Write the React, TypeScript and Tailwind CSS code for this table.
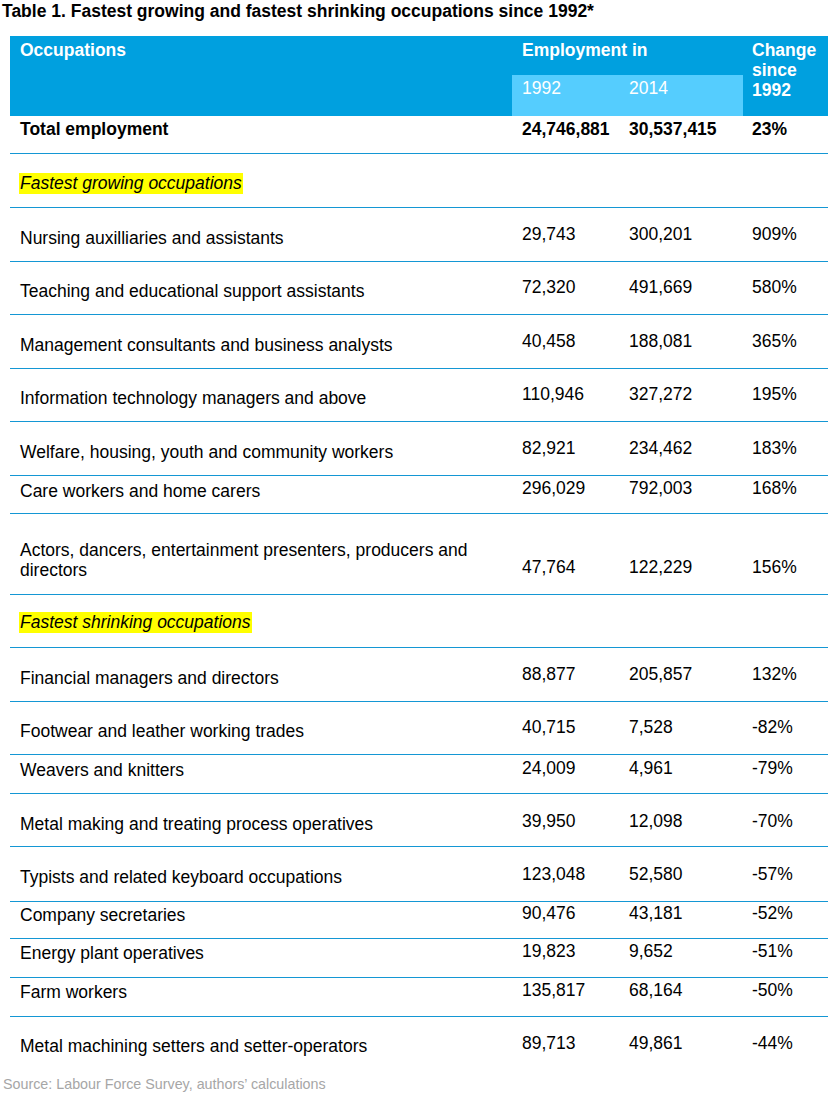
import React from "react";

type Row = {
  label: string;
  a?: string;
  b?: string;
  c?: string;
  h: number;
  pt: number;
  npt?: number;
  kind?: "total" | "section" | "plain";
  last?: boolean;
};

const rows: Row[] = [
  { label: "Total employment", a: "24,746,881", b: "30,537,415", c: "23%", h: 38, pt: 3, npt: 3, kind: "total" },
  { label: "Fastest growing occupations", h: 54, pt: 18, kind: "section" },
  { label: "Nursing auxilliaries and assistants", a: "29,743", b: "300,201", c: "909%", h: 54, pt: 20, npt: 16 },
  { label: "Teaching and educational support assistants", a: "72,320", b: "491,669", c: "580%", h: 53, pt: 19, npt: 15 },
  { label: "Management consultants and business analysts", a: "40,458", b: "188,081", c: "365%", h: 54, pt: 20, npt: 16 },
  { label: "Information technology managers and above", a: "110,946", b: "327,272", c: "195%", h: 53, pt: 19, npt: 15 },
  { label: "Welfare, housing, youth and community workers", a: "82,921", b: "234,462", c: "183%", h: 54, pt: 20, npt: 16 },
  { label: "Care workers and home carers", a: "296,029", b: "792,003", c: "168%", h: 38, pt: 5, npt: 2 },
  { label: "Actors, dancers, entertainment presenters, producers and directors", a: "47,764", b: "122,229", c: "156%", h: 81, pt: 26, npt: 43 },
  { label: "Fastest shrinking occupations", h: 53, pt: 16, kind: "section" },
  { label: "Financial managers and directors", a: "88,877", b: "205,857", c: "132%", h: 54, pt: 20, npt: 16 },
  { label: "Footwear and leather working trades", a: "40,715", b: "7,528", c: "-82%", h: 53, pt: 19, npt: 15 },
  { label: "Weavers and knitters", a: "24,009", b: "4,961", c: "-79%", h: 39, pt: 5, npt: 3 },
  { label: "Metal making and treating process operatives", a: "39,950", b: "12,098", c: "-70%", h: 53, pt: 20, npt: 17 },
  { label: "Typists and related keyboard occupations", a: "123,048", b: "52,580", c: "-57%", h: 55, pt: 20, npt: 17 },
  { label: "Company secretaries", a: "90,476", b: "43,181", c: "-52%", h: 37, pt: 3, npt: 1 },
  { label: "Energy plant operatives", a: "19,823", b: "9,652", c: "-51%", h: 39, pt: 4, npt: 2 },
  { label: "Farm workers", a: "135,817", b: "68,164", c: "-50%", h: 39, pt: 4, npt: 2 },
  { label: "Metal machining setters and setter-operators", a: "89,713", b: "49,861", c: "-44%", h: 50, pt: 19, npt: 16, last: true },
];

const cols = "grid grid-cols-[502px_107px_124px_85px]";

const TableRow = ({ r }: { r: Row }) => {
  const bold = r.kind === "total";
  return (
    <div
      className={`${cols} ${r.last ? "" : "border-b border-[#1497d4]"} box-border`}
      style={{ height: r.h }}
    >
      {r.kind === "section" ? (
        <div className="pl-[9px]" style={{ paddingTop: r.pt }}>
          <span className="inline-block bg-[#ffff00] px-px py-px italic text-[17.5px] leading-[19px]">
            {r.label}
          </span>
        </div>
      ) : (
        <div
          className={`pl-[10px] pr-4 text-[17.5px] leading-[20px] ${bold ? "font-bold" : ""}`}
          style={{ paddingTop: r.pt }}
        >
          {r.label}
        </div>
      )}
      {[r.a, r.b, r.c].map((v, i) => (
        <div
          key={i}
          className={`${i === 2 ? "pl-[9px]" : "pl-[10px]"} text-[17.5px] leading-[20px] whitespace-nowrap ${bold ? "font-bold" : ""}`}
          style={{ paddingTop: r.npt ?? 0 }}
        >
          {v}
        </div>
      ))}
    </div>
  );
};

export default function App() {
  return (
    <div className="w-[836px] h-[1100px] bg-white text-black font-['Liberation_Sans',Arial,sans-serif] overflow-hidden">
      <div className="pl-[2px] pt-[1px] text-[17.5px] font-bold leading-[20px] whitespace-nowrap">
        Table 1. Fastest growing and fastest shrinking occupations since 1992*
      </div>
      <div className="ml-[10px] mt-[15px] w-[818px]">
        <div className={`${cols} h-[80px] bg-[#00a0df] text-white text-[17.5px] leading-[20px]`}>
          <div className="pl-[10px] pt-[4px] font-bold">Occupations</div>
          <div className="col-span-2 flex flex-col">
            <div className="pl-[10px] pt-[4px] h-[39px] font-bold">Employment in</div>
            <div className="grid grid-cols-[107px_124px] flex-1 bg-[#55cdfe]">
              <div className="pl-[10px] pt-[3px]">1992</div>
              <div className="pl-[10px] pt-[3px]">2014</div>
            </div>
          </div>
          <div className="pl-[9px] pt-[4px] font-bold">
            Change
            <br />
            since
            <br />
            1992
          </div>
        </div>
        {rows.map((r, i) => (
          <TableRow key={i} r={r} />
        ))}
      </div>
      <div className="pl-[3px] pt-[9px] text-[14.3px] leading-[16px] text-[#a6a6a6]">
        Source: Labour Force Survey, authors’ calculations
      </div>
    </div>
  );
}
